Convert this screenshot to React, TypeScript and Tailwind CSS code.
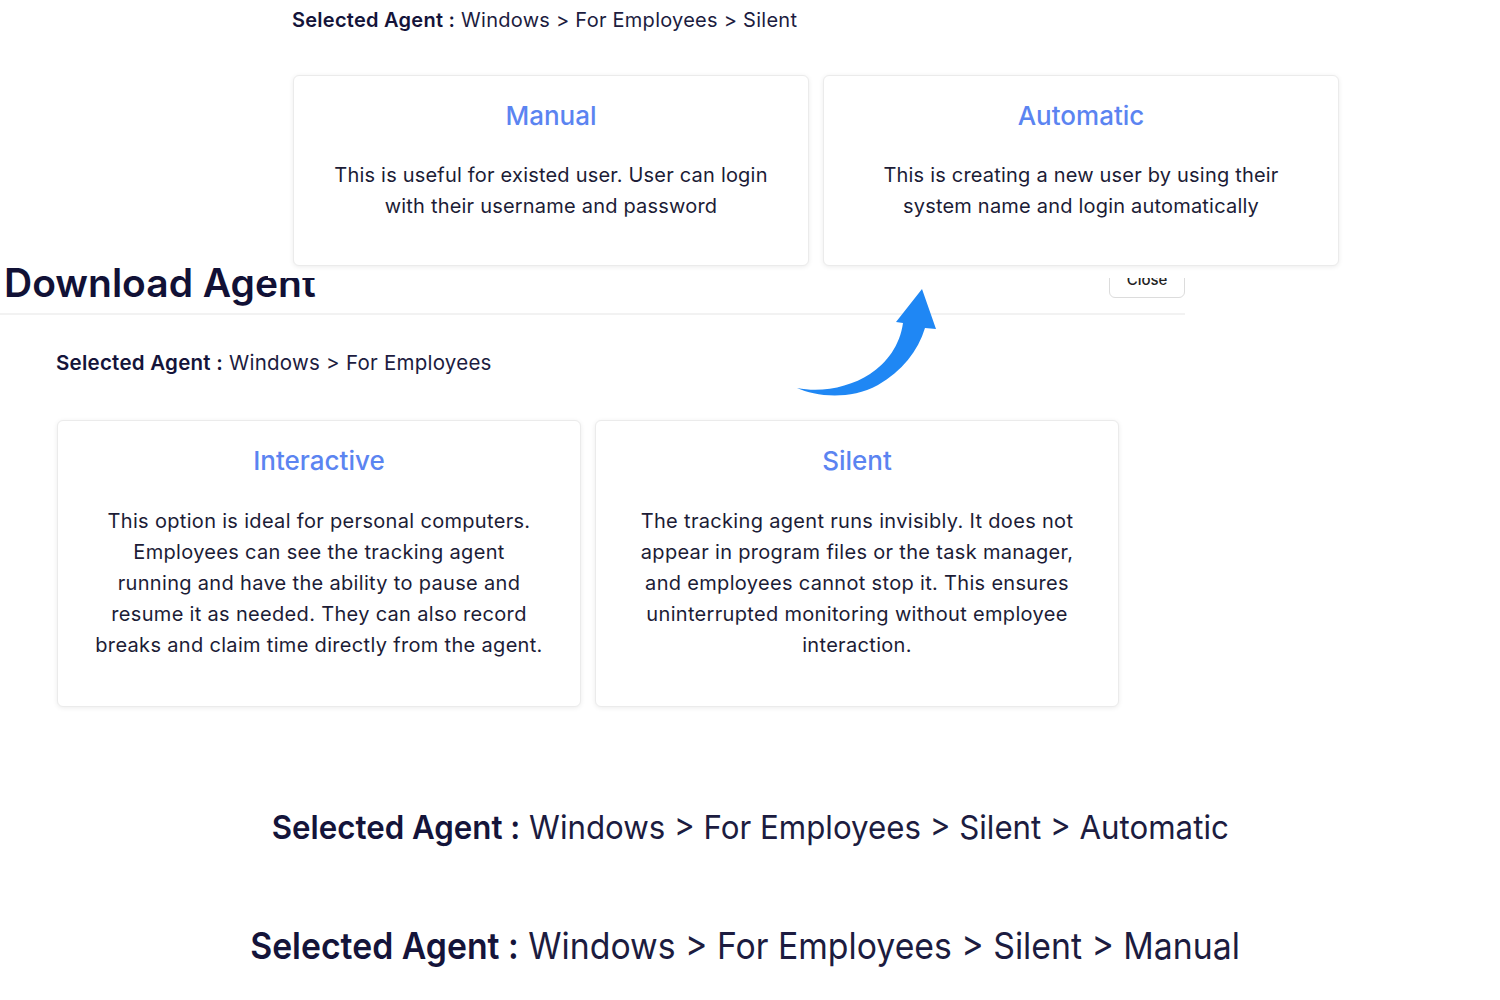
const font = "font-['Inter','Noto_Sans',sans-serif]";

type Option = {
    title: string;
    lines: string[];
};

const modeOptions: Option[] = [
    {
        title: 'Interactive',
        lines: [
            'This option is ideal for personal computers.',
            'Employees can see the tracking agent',
            'running and have the ability to pause and',
            'resume it as needed. They can also record',
            'breaks and claim time directly from the agent.',
        ],
    },
    {
        title: 'Silent',
        lines: [
            'The tracking agent runs invisibly. It does not',
            'appear in program files or the task manager,',
            'and employees cannot stop it. This ensures',
            'uninterrupted monitoring without employee',
            'interaction.',
        ],
    },
];

const loginOptions: Option[] = [
    {
        title: 'Manual',
        lines: [
            'This is useful for existed user. User can login',
            'with their username and password',
        ],
    },
    {
        title: 'Automatic',
        lines: [
            'This is creating a new user by using their',
            'system name and login automatically',
        ],
    },
];

function OptionCard({ option, size }: { option: Option; size: 'lg' | 'sm' }) {
    return (
        <div
            className={
                size === 'lg'
                    ? 'h-[287px] w-[524px] rounded-md border border-[#ebebeb] bg-white pt-[24px] text-center shadow-[0_1px_5px_rgba(0,0,0,0.08)]'
                    : 'h-[191px] w-[516px] rounded-md border border-[#ebebeb] bg-white pt-[24px] text-center shadow-[0_1px_5px_rgba(0,0,0,0.08)]'
            }
        >
            <h3 className="text-[26px] font-medium leading-[32px] text-[#5b84f1]">
                {option.title}
            </h3>
            <p
                className={
                    size === 'lg'
                        ? 'mt-[29px] text-[20px] leading-[31px] tracking-[0.016em] text-[#1c1c36]'
                        : 'mt-[28px] text-[20px] leading-[31px] tracking-[0.01em] text-[#1c1c36]'
                }
            >
                {option.lines.map((line) => (
                    <span key={line} className="block whitespace-nowrap">
                        {line}
                    </span>
                ))}
            </p>
        </div>
    );
}

function Crumb({ path, className }: { path: string; className: string }) {
    return (
        <div className={className}>
            <span className="font-semibold text-[#14143a]">Selected Agent :</span>{' '}
            <span className="text-[#1c1c40]">{path}</span>
        </div>
    );
}

function CurvedArrow() {
    return (
        <svg
            className="absolute left-[790px] top-[285px]"
            width="150"
            height="120"
            viewBox="0 0 150 120"
        >
            <path
                d="M7 103 C25 111 58 116 88 100 C112 86 128 66 135 43 L146 44 L132 4 L106 37 L113 38 C110 60 97 78 80 89 C60 102 32 108 7 103 Z"
                fill="#1f87f4"
            />
        </svg>
    );
}

export default function App() {
    return (
        <div className={`relative h-[1000px] w-[1500px] overflow-hidden bg-white ${font}`}>
            {/* download agent modal underneath */}
            <div className="pt-[260px]">
                <div className="flex w-[1185px] items-end justify-between border-b-2 border-[#f2f2f2] pb-[7px] pl-[4px]">
                    <h1 className="text-[39px] font-semibold leading-[46px] text-[#111136]">
                        Download Agent
                    </h1>
                    <button
                        type="button"
                        className="mb-[8px] h-[36px] w-[76px] rounded-md border border-[#dcdcdc] bg-white text-[15px] font-medium text-[#222]"
                    >
                        Close
                    </button>
                </div>

                <Crumb
                    path="Windows > For Employees"
                    className="ml-[56px] mt-[34px] text-[20.5px] leading-[28px] tracking-[0.012em]"
                />

                <div className="ml-[57px] mt-[43px] flex gap-[14px]">
                    {modeOptions.map((option) => (
                        <OptionCard key={option.title} option={option} size="lg" />
                    ))}
                </div>

                <div className="flex flex-col items-center">
                    <Crumb
                        path="Windows > For Employees > Silent > Automatic"
                        className="mt-[100px] origin-center scale-x-[0.947] whitespace-nowrap text-[33px] leading-[40px]"
                    />
                    <Crumb
                        path="Windows > For Employees > Silent > Manual"
                        className="mr-[10px] mt-[77px] origin-center scale-x-[0.913] whitespace-nowrap text-[37px] leading-[44px]"
                    />
                </div>
            </div>

            {/* silent step panel laid over the modal */}
            <div className="absolute left-[268px] top-0 h-[278px] w-[1090px] bg-white pl-[24px] pt-[6px]">
                <Crumb
                    path="Windows > For Employees > Silent"
                    className="text-[20px] leading-[28px] tracking-[0.013em]"
                />
                <div className="ml-px mt-[41px] flex gap-[14px]">
                    {loginOptions.map((option) => (
                        <OptionCard key={option.title} option={option} size="sm" />
                    ))}
                </div>
            </div>

            <CurvedArrow />
        </div>
    );
}
